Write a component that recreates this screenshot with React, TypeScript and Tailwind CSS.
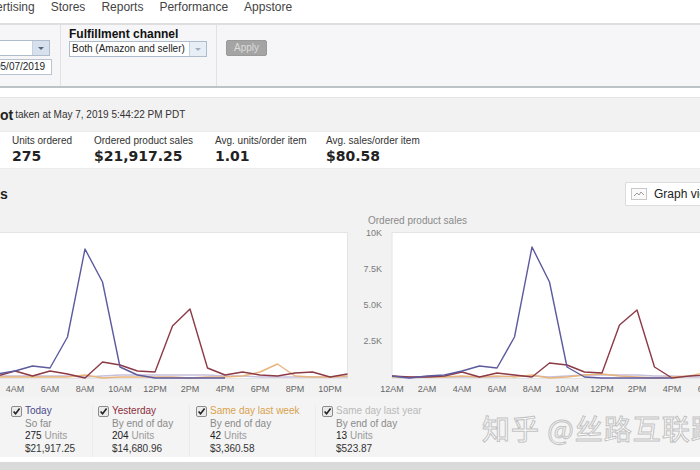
// Seller dashboard – Sales snapshot + "Sales" comparison charts, scrolled right.

const NAV = ["ertising", "Stores", "Reports", "Performance", "Appstore"];

type Series = { color: string; data: number[] };

const HOURS = ["12AM", "2AM", "4AM", "6AM", "8AM", "10AM", "12PM", "2PM", "4PM", "6PM", "8PM", "10PM"];

// Heights in px above the baseline (144px = top tick).
const UNITS: Series[] = [
  { color: "#c6c0dc", data: [1, 1, 1, 2, 2, 2, 2, 2, 1, 2, 3, 3, 3, 3, 3, 3, 2, 2, 1, 1, 1, 1, 1, 1] },
  { color: "#e8b47c", data: [1, 0, 1, 1, 1, 1, 1, 1, 3, 0, 1, 1, 1, 1, 0, 1, 1, 2, 6, 14, 2, 1, 1, 2] },
  { color: "#8c3a46", data: [1, 2, 1, 2, 7, 2, 7, 4, 0, 16, 13, 7, 6, 52, 69, 10, 3, 6, 3, 2, 5, 6, 1, 4] },
  { color: "#5d5a9e", data: [3, 2, 3, 4, 7, 12, 10, 41, 129, 96, 11, 3, 0, 0, 0, 0, 0] },
];

const SALES: Series[] = [
  { color: "#c6c0dc", data: [1, 0, 1, 1, 1, 1, 1, 2, 2, 1, 2, 3, 3, 3, 3, 2, 2, 1, 1, 2, 1, 1, 2, 1] },
  { color: "#e8b47c", data: [1, 1, 1, 1, 2, 1, 2, 1, 3, 0, 1, 3, 4, 2, 1, 0, 1, 2, 6, 14, 2, 1, 2, 1] },
  { color: "#8c3a46", data: [2, 1, 1, 2, 6, 1, 5, 3, 1, 15, 13, 6, 5, 53, 68, 11, 0, 2, 3, 2, 1, 4, 5, 3] },
  { color: "#5d5a9e", data: [2, 0, 2, 3, 7, 12, 10, 41, 131, 96, 11, 1, 0, 0, 0, 0, 0] },
];

const LEGEND = [
  { name: "Today", color: "text-[#4b4a8c]", sub: "So far", units: "275", sales: "$21,917.25", cls: "w-[93px] pl-[11px]" },
  { name: "Yesterday", color: "text-[#8b2d3a]", sub: "By end of day", units: "204", sales: "$14,680.96", cls: "w-[97px] pl-[5px]" },
  { name: "Same day last week", color: "text-[#d9a24e]", sub: "By end of day", units: "42", sales: "$3,360.58", cls: "w-[126px] pl-[6px]" },
  { name: "Same day last year", color: "text-[#b9b9b9]", sub: "By end of day", units: "13", sales: "$523.87", cls: "w-[160px] pl-[6px] border-r-0" },
];

function Select({ label, cls, arrowCls, triCls }: { label: string; cls: string; arrowCls: string; triCls: string }) {
  return (
    <div className={"flex h-[16px] border border-[#aebccb] bg-white " + cls}>
      <span className="flex-1 truncate pl-[2px] text-[10px] leading-[14px] text-[#222]">{label}</span>
      <span className={"flex w-[17px] items-center justify-center border-l border-[#c5d2df] " + arrowCls}>
        <span className={"h-0 w-0 border-x-[3px] border-t-[3px] border-x-transparent " + triCls} />
      </span>
    </div>
  );
}

function Checkbox() {
  return (
    <svg width="11" height="11" viewBox="0 0 11 11" className="mt-[1px] shrink-0">
      <rect x="0.5" y="0.5" width="10" height="10" rx="1.5" fill="#ebebeb" stroke="#8c8c8c" />
      <path d="M2.6 5.4 L4.6 7.8 L8.6 2.6" fill="none" stroke="#222" strokeWidth="1.6" />
    </svg>
  );
}

function Chart({ title, ticks, series }: { title: string; ticks: string[]; series: Series[] }) {
  const x0 = 24;
  const step = 17.5;
  const base = 151;
  return (
    <div className="flex w-[427px] shrink-0 flex-col">
      <div className="h-[12px] text-[10px] leading-[12px] text-[#8a8a8a]">{title}</div>
      <svg width={427} height={170} className="block overflow-visible">
        <rect x={x0} y={5.5} width={402.5} height={146} fill="#fff" stroke="#e4e4e4" />
        {ticks.map((t, i) => (
          <text key={t} x={14} y={7 + i * 36} textAnchor="end" dominantBaseline="middle" fontSize={9} fill="#7a7a7a">
            {t}
          </text>
        ))}
        {series.map((s) => (
          <polyline
            key={s.color}
            points={s.data.map((v, h) => `${x0 + h * step},${base - v}`).join(" ")}
            fill="none"
            stroke={s.color}
            strokeWidth={1.4}
            strokeLinejoin="round"
          />
        ))}
        {HOURS.map((h, i) => (
          <text key={h} x={x0 + i * 2 * step} y={162.5} textAnchor="middle" dominantBaseline="middle" fontSize={9} fill="#666">
            {h}
          </text>
        ))}
      </svg>
    </div>
  );
}

export default function App() {
  return (
    <div className="relative h-[470px] w-[700px] overflow-hidden bg-white font-['Liberation_Sans',Arial,sans-serif] text-[#333]">
      {/* Navigation */}
      <nav className="-ml-[4px] flex h-[23px] items-start gap-[16px] text-[12px] leading-[14px] text-[#444]">
        {NAV.map((n) => (
          <span key={n} className="whitespace-nowrap">{n}</span>
        ))}
      </nav>

      {/* Filters */}
      <div className="flex h-[65px] border-t-2 border-b-2 border-t-[#dedede] border-b-[#bcc3c7] bg-[#f6f6f8]">
        <div className="flex w-[61px] shrink-0 flex-col items-end gap-[3px] border-r border-[#e2e2e4] pt-[15px]">
          <Select label="" cls="mr-[10px] w-[90px] shrink-0" arrowCls="bg-[#d6e1ed]" triCls="border-t-[#56687e]" />
          <div className="mr-[8px] h-[16px] w-[62px] shrink-0 border border-[#b7c3cf] bg-white pl-[4px] text-[10px] leading-[14px] text-[#222]">
            05/07/2019
          </div>
        </div>
        <div className="w-[156px] shrink-0 border-r border-[#e2e2e4] pl-[8px] pt-[2px]">
          <div className="text-[12px] font-bold leading-[14px] text-[#111]">Fulfillment channel</div>
          <Select label="Both (Amazon and seller)" cls="w-[138px]" arrowCls="bg-[#e7eef6]" triCls="border-t-[#9fb0c2]" />
        </div>
        <div className="pl-[9px] pt-[15px]">
          <div className="h-[16px] w-[41px] rounded-[2px] border border-[#9a9a9a] bg-[#a4a4a4] text-center text-[10px] leading-[14px] text-[#dcdcdc]">
            Apply
          </div>
        </div>
      </div>

      <div className="h-[9px] bg-white" />

      {/* Snapshot */}
      <div className="flex h-[34px] items-center border-t border-[#e4e4e4] bg-[#f2f2f2]">
        <span className="text-[14px] font-bold leading-[16px] text-[#222]">ot</span>
        <span className="ml-[2px] text-[10px] leading-[12px] text-[#333]">taken at May 7, 2019 5:44:22 PM PDT</span>
      </div>
      <div className="flex h-[38px] border-y border-[#ebebeb] bg-white pl-[12px] pt-[3px]">
        {[
          ["Units ordered", "275", "w-[82px]"],
          ["Ordered product sales", "$21,917.25", "w-[121px]"],
          ["Avg. units/order item", "1.01", "w-[111px]"],
          ["Avg. sales/order item", "$80.58", "w-[120px]"],
        ].map(([label, value, w]) => (
          <div key={label} className={"flex flex-col " + w}>
            <span className="text-[10px] leading-[12px] text-[#333]">{label}</span>
            <span className="font-['DejaVu_Sans',Verdana,sans-serif] text-[14px] font-bold leading-[18px] text-[#222]">{value}</span>
          </div>
        ))}
      </div>

      {/* Sales */}
      <div className="relative bg-[#f2f2f2]">
        <div className="flex h-[37px] items-start pt-[13px]">
          <span className="mt-[4px] text-[14px] font-bold leading-[16px] text-[#222]">s</span>
          <div className="ml-auto flex h-[24px] w-[75px] items-center gap-[7px] overflow-hidden rounded-l-[2px] border border-r-0 border-[#dcdcdc] bg-white pl-[5px]">
            <svg width="16" height="12" viewBox="0 0 16 12" className="shrink-0">
              <rect x="0.5" y="0.5" width="15" height="11" fill="#fafafa" stroke="#c8c8c8" />
              <polyline points="3,8 6,5 8,7 10,4 13,7" fill="none" stroke="#9a9a9a" />
            </svg>
            <span className="whitespace-nowrap text-[12px] leading-[14px] text-[#222]">Graph view</span>
          </div>
        </div>
        <div className="-ml-[79px] mt-[9px] flex gap-[20px]">
          <Chart title="Units ordered" ticks={["400", "300", "200", "100"]} series={UNITS} />
          <Chart title="Ordered product sales" ticks={["10K", "7.5K", "5.0K", "2.5K"]} series={SALES} />
        </div>

        {/* Legend */}
        <div className="flex h-[60px] bg-[#f4f4f4] pt-[8px]">
          {LEGEND.map((l) => (
            <div key={l.name} className={"flex shrink-0 gap-[3px] border-r border-[#ebebeb] " + l.cls}>
              <Checkbox />
              <div className="flex flex-col whitespace-nowrap text-[10px] leading-[12.5px]">
                <span className={l.color}>{l.name}</span>
                <span className="text-[#8a8a8a]">{l.sub}</span>
                <span className="text-[#222]">
                  {l.units} <span className="text-[#9a9a9a]">Units</span>
                </span>
                <span className="text-[#333]">{l.sales}</span>
              </div>
            </div>
          ))}
        </div>
        <div className="h-[5px] bg-white" />
        <div className="h-[10px] bg-[#dadada]" />

        {/* Watermark */}
        <div className="absolute left-[482px] top-[245px] whitespace-nowrap font-['Noto_Sans_CJK_SC',sans-serif] text-[28px] leading-[28px] tracking-[1px] text-white [-webkit-text-stroke:1px_#c2c2c2]">
          知乎 @丝路互联跨境
        </div>
      </div>
    </div>
  );
}
